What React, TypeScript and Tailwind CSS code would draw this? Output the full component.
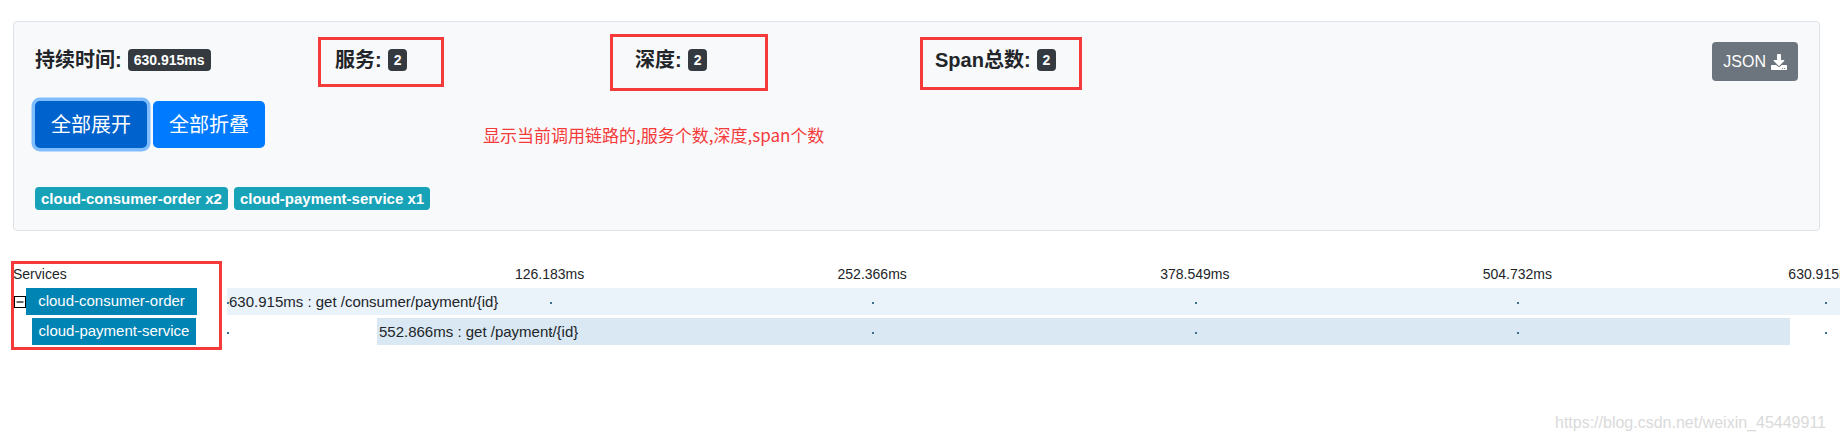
import { FaDownload } from 'react-icons/fa';

const TOTAL = 630.915;

const stats = [
  { label: '持续时间:', value: '630.915ms', box: '' },
  { label: '服务:', value: '2', box: 'left-[-17px] top-[-11px] w-[126px] h-[50px]' },
  { label: '深度:', value: '2', box: 'left-[-25px] top-[-14px] w-[158px] h-[57px]' },
  { label: 'Span总数:', value: '2', box: 'left-[-15px] top-[-11px] w-[162px] h-[53px]' },
];

const serviceTags = ['cloud-consumer-order x2', 'cloud-payment-service x1'];

const ticks = [
  { left: 322.6, label: '126.183ms' },
  { left: 645.2, label: '252.366ms' },
  { left: 967.8, label: '378.549ms' },
  { left: 1290.4, label: '504.732ms' },
  { left: 1596, label: '630.915ms' },
];

const dots = [0, 322.6, 645.2, 967.8, 1290.4, 1598];

const spans = [
  { service: 'cloud-consumer-order', root: true, start: 0, dur: 630.915, path: 'get /consumer/payment/{id}', bg: 'bg-[#eaf2fa]' },
  { service: 'cloud-payment-service', root: false, start: 58.67, dur: 552.866, path: 'get /payment/{id}', bg: 'bg-[#d9e8f3]' },
];

function MinusBox() {
  return (
    <svg width="12" height="12" viewBox="0 0 12 12" className="shrink-0">
      <rect x="0.5" y="0.5" width="11" height="11" fill="white" stroke="black" strokeWidth="1" />
      <line x1="2.5" y1="6" x2="9.5" y2="6" stroke="black" strokeWidth="1.2" />
    </svg>
  );
}

export default function App() {
  return (
    <div className="relative w-[1840px] h-[441px] overflow-hidden bg-white text-[#212529] font-['Liberation_Sans','Noto_Sans_CJK_SC',sans-serif]">
      {/* 汇总卡片 */}
      <div className="ml-[13px] mr-[20px] mt-[21px] h-[210px] rounded-[4px] border border-[#dee2e6] bg-[#f8f9fa] px-[21px] pt-[20px]">
        <div className="flex justify-between h-[39px]">
          <div className="flex">
            {stats.map((s) => (
              <div key={s.label} className="relative w-[300px] mt-[6px] h-[24px] flex items-center">
                <span className="text-[20px] leading-[24px] font-bold text-[#212529]">{s.label}</span>
                <span className="ml-[6px] h-[22px] px-[6px] rounded-[4px] bg-[#343a40] text-white text-[14px] font-bold leading-[22px]">
                  {s.value}
                </span>
                {s.box && <div className={`absolute border-[3px] border-[#f53a3a] ${s.box}`} />}
              </div>
            ))}
          </div>
          <button className="h-[39px] px-[11px] rounded-[4px] bg-[#6c757d] text-white text-[16px] flex items-center gap-[5px]">
            <span>JSON</span>
            <FaDownload size={16} />
          </button>
        </div>

        <div className="mt-[20px] flex items-start">
          <button className="h-[47px] w-[112px] rounded-[5px] bg-[#0062cc] text-white text-[20px] shadow-[0_0_0_3.5px_#80bdff]">
            全部展开
          </button>
          <button className="ml-[6px] h-[47px] w-[112px] rounded-[5px] bg-[#007bff] text-white text-[20px]">
            全部折叠
          </button>
          <span className="ml-[218px] mt-[22px] text-[17px] leading-[24px] text-[#f53a3a] font-['Noto_Sans_CJK_SC',sans-serif]">
            显示当前调用链路的,服务个数,深度,span个数
          </span>
        </div>

        <div className="mt-[39px] flex gap-[6px]">
          {serviceTags.map((t) => (
            <span key={t} className="h-[23px] px-[6px] rounded-[4px] bg-[#17a2b8] text-white text-[15px] font-bold leading-[23px]">
              {t}
            </span>
          ))}
        </div>
      </div>

      {/* 链路时间轴 */}
      <div className="relative mt-[33px]">
        <div className="flex h-[20px] items-center">
          <div className="w-[227px] pl-[13px] text-[14px]">Services</div>
          <div className="relative flex-1 h-full">
            {ticks.map((t) => (
              <span
                key={t.label}
                className="absolute top-0 leading-[20px] text-[14px] -translate-x-1/2 whitespace-nowrap"
                style={{ left: t.left }}
              >
                {t.label}
              </span>
            ))}
          </div>
        </div>

        <div className="mt-[4px] flex flex-col gap-[3px]">
          {spans.map((s) => (
            <div key={s.service} className="flex h-[27px]">
              <div className="w-[227px] pl-[14px] flex items-center">
                {s.root ? <MinusBox /> : <div className="w-[18px]" />}
                <div
                  className={`h-[27px] bg-[#0084b4] text-white text-[15px] flex items-center justify-center ${
                    s.root ? 'w-[171px]' : 'w-[164px]'
                  }`}
                >
                  {s.service}
                </div>
              </div>
              <div className="relative flex-1 h-full">
                <div
                  className={`absolute top-0 h-full ${s.bg} text-[15px] leading-[27px] pl-[2px] whitespace-nowrap`}
                  style={{ left: `${(s.start / TOTAL) * 100}%`, width: `${(s.dur / TOTAL) * 100}%` }}
                >
                  {s.dur.toFixed(3)}ms : {s.path}
                </div>
                {dots.map((d) => (
                  <span
                    key={d}
                    className="absolute top-[14px] w-[2px] h-[2px] bg-[#3d6f8f]"
                    style={{ left: d }}
                  />
                ))}
              </div>
            </div>
          ))}
        </div>

        <div className="absolute left-[11px] top-[-3px] w-[211px] h-[89px] border-[3px] border-[#f53a3a]" />
      </div>

      <div className="absolute right-[14px] top-[411px] text-[16px] text-[#dadada]">
        https://blog.csdn.net/weixin_45449911
      </div>
    </div>
  );
}
